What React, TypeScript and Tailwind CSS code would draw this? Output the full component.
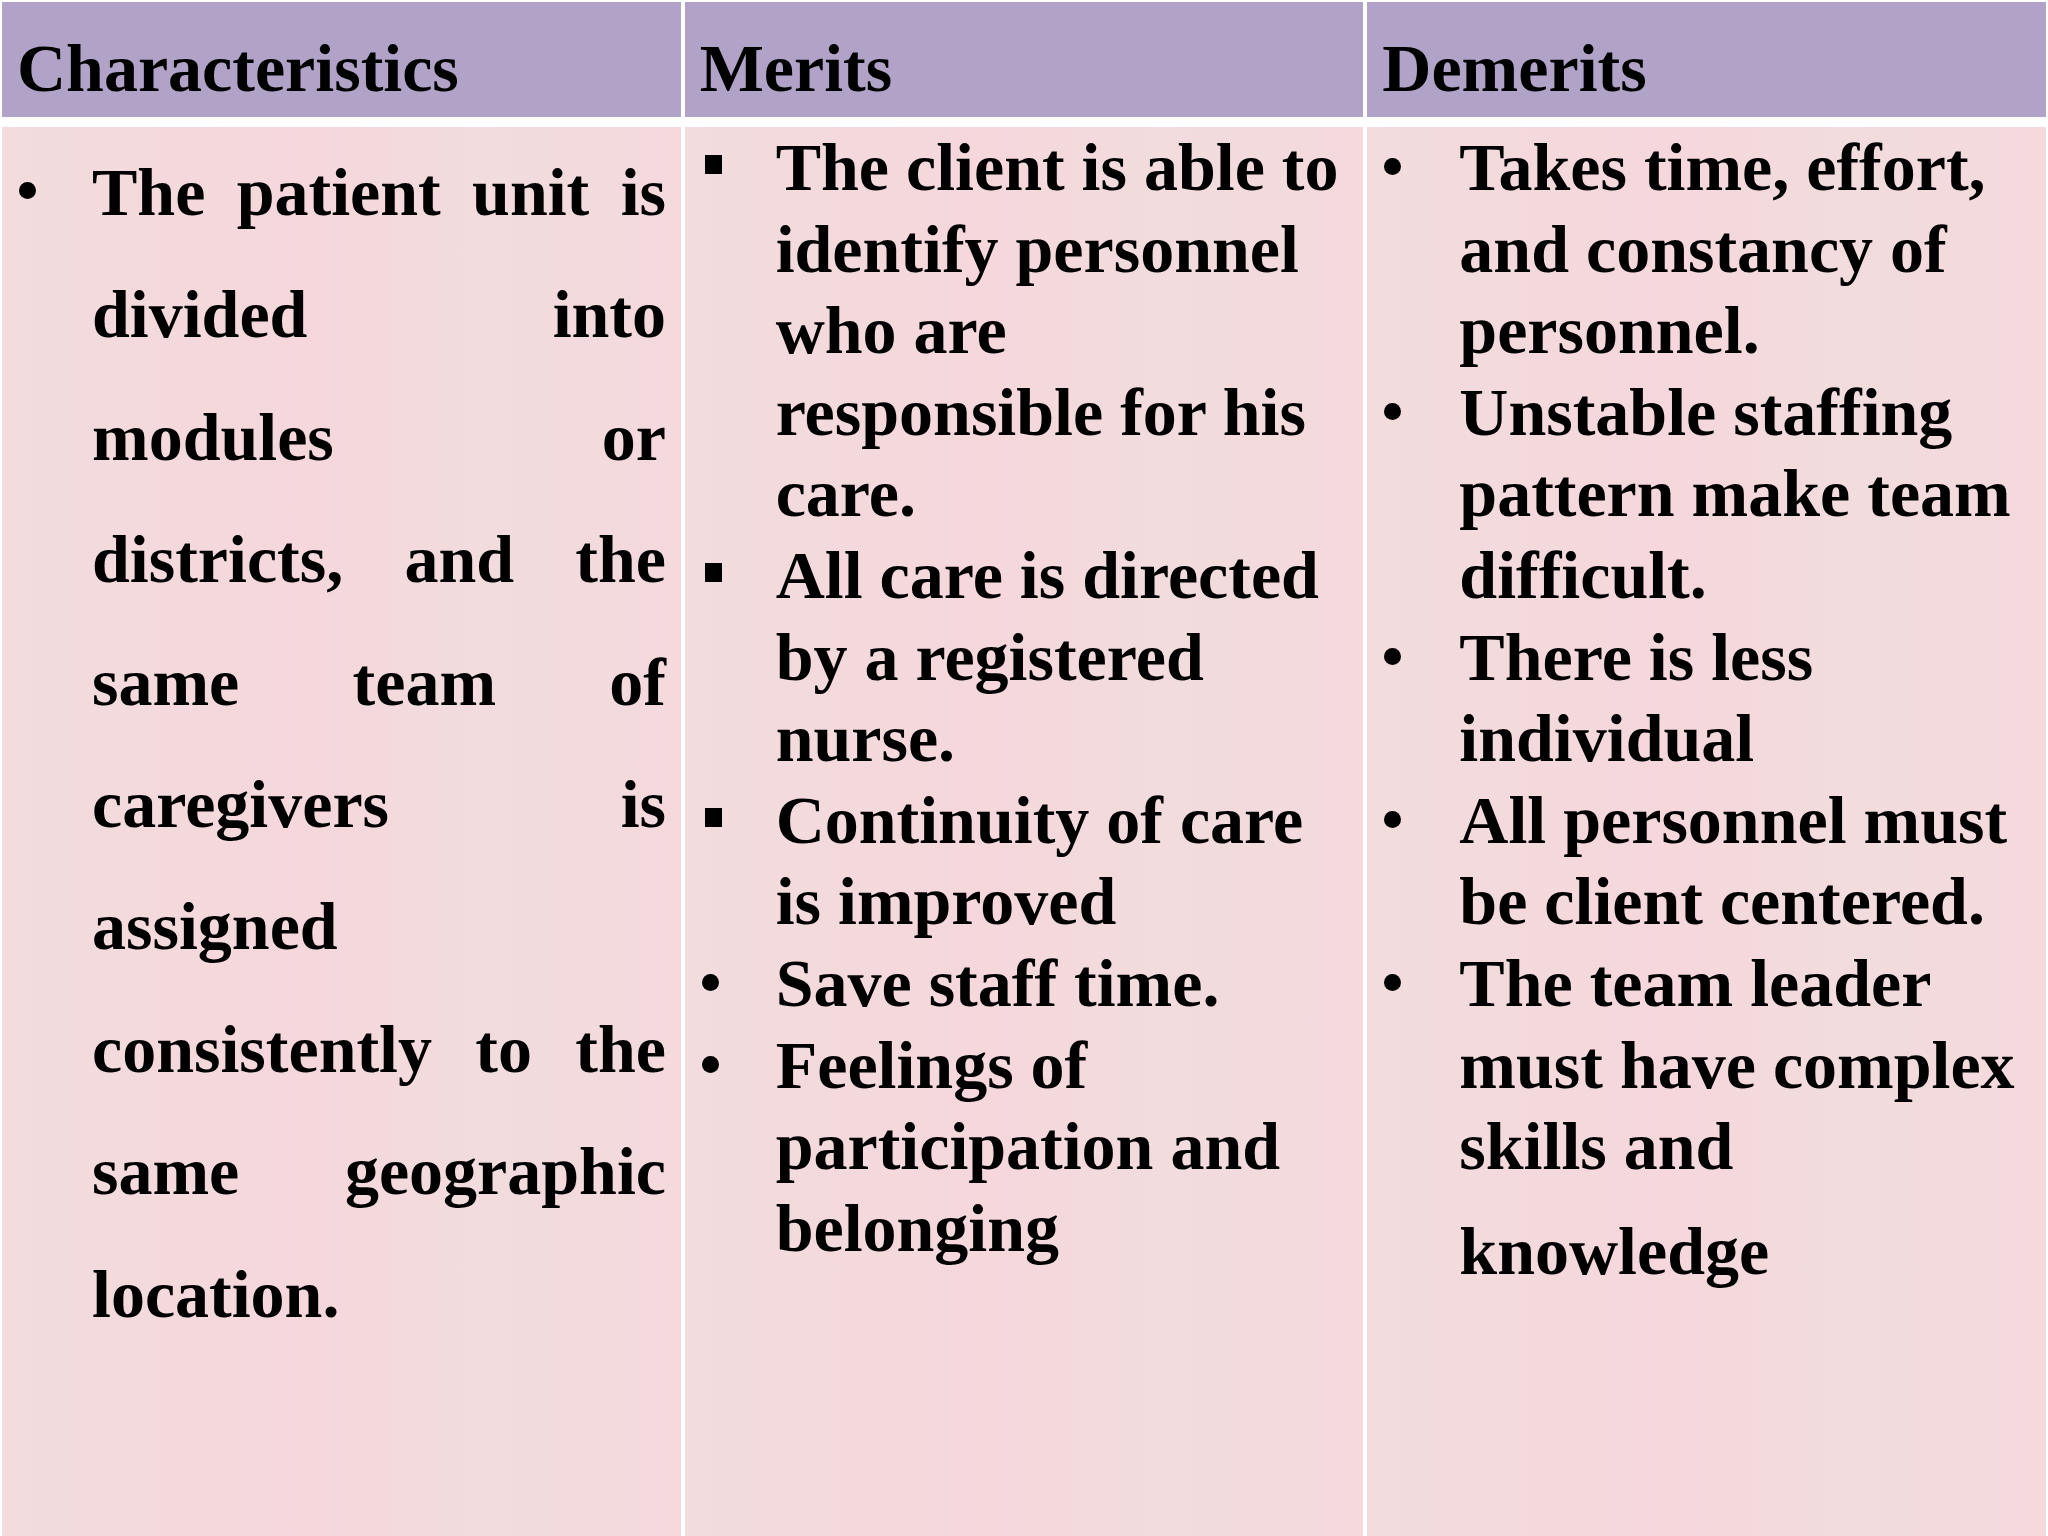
import React from "react";

type Item = { text: string; kind: "dot" | "square"; extra?: string };

const merits: Item[] = [
  { text: "The client is able to identify personnel who are responsible for his care.", kind: "square" },
  { text: "All care is directed by a registered nurse.", kind: "square" },
  { text: "Continuity of care is improved", kind: "square" },
  { text: "Save staff time.", kind: "dot" },
  { text: "Feelings of participation and belonging", kind: "dot" },
];

const demerits: Item[] = [
  { text: "Takes time, effort, and constancy of personnel.", kind: "dot" },
  { text: "Unstable staffing pattern make team difficult.", kind: "dot" },
  { text: "There is less individual", kind: "dot" },
  { text: "All personnel must be client centered.", kind: "dot" },
  { text: "The team leader must have complex skills and", kind: "dot", extra: "knowledge" },
];

const cellBody =
  "bg-[linear-gradient(90deg,#f2dcdd_0%,#f5d7dc_45%,#f2dcdd_70%,#f4d9dd_100%)]";

function Header({ label }: { label: string }) {
  return (
    <div className="bg-[#b1a2c8] pl-[15px] pt-[26px] text-[68px] leading-[1.2] font-bold text-black">
      {label}
    </div>
  );
}

export default function App() {
  return (
    <div className="h-[1536px] w-[2048px] overflow-hidden bg-white px-[2px] pt-[2px] font-['Liberation_Serif','Times_New_Roman',serif] text-black">
      <div className="grid h-full grid-cols-3 grid-rows-[115px_1fr] gap-x-[4px] gap-y-[10px]">
        <Header label="Characteristics" />
        <Header label="Merits" />
        <Header label="Demerits" />

        {/* Characteristics */}
        <div className={`${cellBody} pt-[4px]`}>
          <div className="grid grid-cols-[90px_574px]">
            <div>
              <div className="ml-[17px] mt-[51px] h-[17px] w-[17px] rounded-full bg-black" />
            </div>
            <p className="text-justify text-[68px] leading-[1.8] font-bold">
              The patient unit is divided into modules or districts, and the same team of caregivers is
              assigned consistently to the same geographic location.
            </p>
          </div>
        </div>

        {/* Merits */}
        <div className={`${cellBody} pt-0`}>
          <div className="flex flex-col">
            {merits.map((m) => (
              <div key={m.text} className="grid grid-cols-[91px_570px]">
                <div>
                  {m.kind === "square" ? (
                    <div className="ml-[20px] mt-[28px] h-[19px] w-[17px] bg-black" />
                  ) : (
                    <div className="ml-[17px] mt-[31px] h-[17px] w-[17px] rounded-full bg-black" />
                  )}
                </div>
                <p className="text-[68px] leading-[1.2] font-bold">{m.text}</p>
              </div>
            ))}
          </div>
        </div>

        {/* Demerits */}
        <div className={`${cellBody} pt-0`}>
          <div className="flex flex-col">
            {demerits.map((d) => (
              <div key={d.text} className="grid grid-cols-[92px_580px]">
                <div>
                  <div className="ml-[17px] mt-[31px] h-[17px] w-[17px] rounded-full bg-black" />
                </div>
                <div className="text-[68px] leading-[1.2] font-bold">
                  <p>{d.text}</p>
                  {d.extra && <p className="mt-[23px]">{d.extra}</p>}
                </div>
              </div>
            ))}
          </div>
        </div>
      </div>
    </div>
  );
}
